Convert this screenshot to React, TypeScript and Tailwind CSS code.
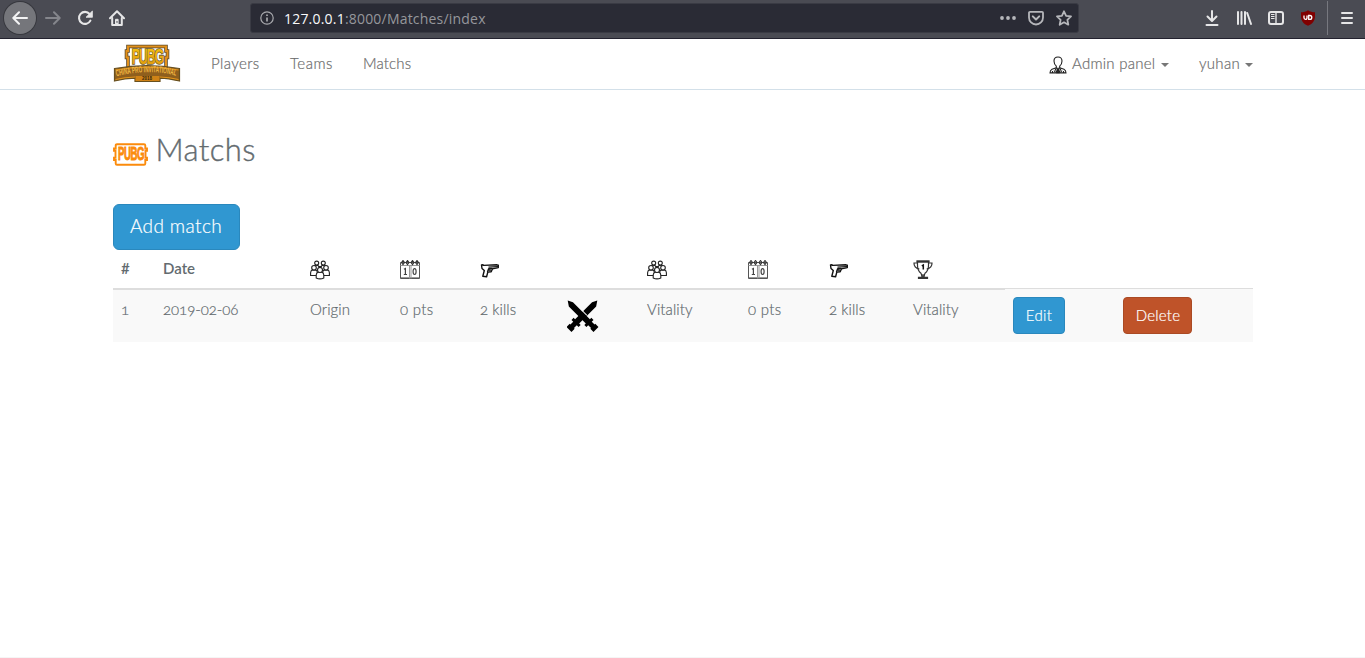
import type { ReactNode } from 'react';

const UI = "font-['Lato','Liberation_Sans',sans-serif]";

function Back() {
  return (
    <span className="flex h-8 w-8 items-center justify-center rounded-full bg-[#75767b] shadow-[0_0_0_1px_#37383e]">
      <svg width="16" height="16" viewBox="0 0 16 16" fill="none" stroke="#f3f3f4" strokeWidth="2" strokeLinecap="round" strokeLinejoin="round">
        <path d="M15 8H1.5M7 2.3 1.3 8 7 13.7" />
      </svg>
    </span>
  );
}

function Forward() {
  return (
    <svg width="16" height="16" viewBox="0 0 16 16" fill="none" stroke="#85868c" strokeWidth="2" strokeLinecap="round" strokeLinejoin="round">
      <path d="M1 8h13.5M9 2.3 14.7 8 9 13.7" />
    </svg>
  );
}

function Reload() {
  return (
    <svg width="16" height="16" viewBox="0 0 16 16" fill="none">
      <path d="M13.4 10.6A6 6 0 1 1 12.6 4" stroke="#e6e6e7" strokeWidth="2.1" strokeLinecap="round" />
      <path d="M15.4 1v6.3H9z" fill="#e6e6e7" stroke="#e6e6e7" strokeWidth=".8" strokeLinejoin="round" />
    </svg>
  );
}

function Home() {
  return (
    <svg width="16" height="16" viewBox="0 0 16 16" fill="none" stroke="#e6e6e7" strokeWidth="2" strokeLinecap="round" strokeLinejoin="round">
      <path d="M1 8.3 8 1.3l7 7" />
      <path d="M3.2 8v7h9.6V8" />
      <path d="M6.9 9.3h2.2V15H6.9z" fill="#e6e6e7" strokeWidth="1" />
      <path d="M8 11.6v.6" stroke="#4a4b53" strokeWidth="1.2" />
    </svg>
  );
}

function UrlBar() {
  return (
    <div className="ml-[125px] flex h-[30px] w-[829px] items-center rounded-[3px] border border-[#3a3b44] bg-[#2a2b35] pr-[6px] pl-[9px]">
      <svg width="14" height="14" viewBox="0 0 14 14" fill="none" stroke="#a9aaae">
        <circle cx="7" cy="7" r="6.2" strokeWidth="1.2" />
        <path d="M7 6.4v4M7 3.4v1.6" strokeWidth="1.7" />
      </svg>
      <span className="mt-[2px] ml-[10px] font-['Open_Sans','Noto_Sans',sans-serif] text-[14px] leading-5 tracking-[0.2px] whitespace-nowrap text-[#96979c]">
        <span className="text-[#f9f9fa]">127.0.0.1</span>:8000/Matches/index
      </span>
      <span className="ml-auto flex items-center gap-3">
        <svg width="16" height="16" viewBox="0 0 16 16" fill="#b6b7bb">
          <circle cx="2" cy="8" r="1.9" />
          <circle cx="8" cy="8" r="1.9" />
          <circle cx="14" cy="8" r="1.9" />
        </svg>
        <svg width="16" height="16" viewBox="0 0 16 16" fill="none" stroke="#b6b7bb" strokeLinecap="round" strokeLinejoin="round">
          <path d="M2 1.8h12a1 1 0 0 1 1 1V7.500a7 7 0 0 1-14 0V2.800a1 1 0 0 1 1-1z" strokeWidth="1.8" />
          <path d="M4.800 6.400 8 9.500l3.200-3.100" strokeWidth="2" />
        </svg>
        <svg width="16" height="16" viewBox="0 0 16 16" fill="none" stroke="#b6b7bb" strokeWidth="1.8" strokeLinejoin="round">
          <path d="m8 1.300 2.100 4.500 4.900.6-3.600 3.400.9 4.900L8 12.300l-4.300 2.400.9-4.900L1 6.400l4.900-.6z" />
        </svg>
      </span>
    </div>
  );
}

function BrowserBar() {
  return (
    <div className="flex h-[39px] items-start border-b border-[#23222f] bg-[#4a4b53] pt-[3px]">
      <div className="flex h-[30px] w-full items-center">
        <span className="ml-1"><Back /></span>
        <span className="ml-[9px]"><Forward /></span>
        <span className="ml-4"><Reload /></span>
        <span className="ml-4"><Home /></span>
        <UrlBar />
        <div className="ml-auto flex items-center gap-4">
          <svg width="16" height="16" viewBox="0 0 16 16" fill="none" stroke="#e6e6e7" strokeWidth="2" strokeLinecap="round" strokeLinejoin="round">
            <path d="M8 1v9.500M3.500 6.500 8 11l4.500-4.500M2.500 15h11" />
          </svg>
          <svg width="16" height="16" viewBox="0 0 16 16" fill="none" stroke="#e6e6e7" strokeWidth="2" strokeLinecap="round">
            <path d="M2 2v12M5.500 2v12M9 2v12" />
            <path d="m11.200 3 3.800 11" />
          </svg>
          <svg width="16" height="16" viewBox="0 0 16 16" fill="none" stroke="#e6e6e7">
            <rect x="1" y="2" width="14" height="12" rx="2" strokeWidth="2" />
            <path d="M8 2v12" strokeWidth="1.400" />
            <path d="M3 4.500h3.500M3 6.500h3.500M3 8.500h3.500" />
          </svg>
          <svg width="16" height="16" viewBox="0 0 16 16">
            <path d="M8 .2C10 1.700 12.500 2.200 15 2.200V6c0 5-2.500 7.800-7 9.800C3.500 13.800 1 11 1 6V2.200C3.500 2.200 6 1.700 8 .2z" fill="#800000" />
            <path d="M4 5.500v2.300q0 1.500 1.500 1.500T7 7.800V5.500" fill="none" stroke="#fff" strokeWidth="1.300" />
            <path d="M8.700 5.500h1.200a1.900 1.900 0 0 1 0 3.800H8.700z" fill="none" stroke="#fff" strokeWidth="1.300" />
          </svg>
        </div>
        <span className="ml-[11px] h-[34px] w-px bg-[#77787f]" />
        <svg className="mr-[11px] ml-[12px]" width="14" height="14" viewBox="0 0 14 14" stroke="#e6e6e7" strokeWidth="2" strokeLinecap="round">
          <path d="M2 2h10M2 7h10M2 12h10" />
        </svg>
      </div>
    </div>
  );
}

function BrandLogo() {
  return (
    <svg width="68" height="39" viewBox="0 0 68 39">
      <defs>
        <linearGradient id="gold" x1="0" y1="0" x2="0" y2="1">
          <stop offset="0" stopColor="#f6c40f" />
          <stop offset="1" stopColor="#dd950e" />
        </linearGradient>
        <path id="ribbonArc" d="M3.500 32.300Q18 28.600 34 28.200T64.500 32.300" />
      </defs>
      <path d="M15 24V13.500h-1.500V7H15V2.500h38V7h1.500v6.500H53V24" fill="#fff" stroke="#5d4a2b" strokeWidth="3.600" />
      <path d="M15 24V13.500h-1.500V7H15V2.500h38V7h1.500v6.500H53V24" fill="none" stroke="#e2901a" strokeWidth="2" />
      <g transform="translate(18.800 20.300) scale(.64 1.060)">
        <text x="0" y="0" fontFamily="Liberation Sans, sans-serif" fontWeight="bold" fontSize="20" letterSpacing="-2.500" textLength="48" fill="url(#gold)" stroke="#6d5a2c" strokeWidth="1.600" paintOrder="stroke">PUBG</text>
      </g>
      <path d="M1.500 24.500Q34 18.800 66.500 24.500V37Q55 34.500 47 34.200V37.500H22v-3.300Q12 34.500 1.500 37z" fill="#8f5f1d" stroke="#68501f" strokeWidth="1.200" />
      <path d="M2.500 26Q34 20.300 65.500 26M2.500 35.500Q12 33.300 22 33M47 33Q56 33.300 65.500 35.500" fill="none" stroke="#e2941c" strokeWidth="1.200" />
      <text fontFamily="Liberation Sans, sans-serif" fontWeight="bold" fontSize="8.800" fill="#f0b540">
        <textPath href="#ribbonArc" textLength="60" lengthAdjust="spacingAndGlyphs">CHINA PRO INVITATIONAL</textPath>
      </text>
      <path d="M22.500 32h24v5h-24z" fill="#cf8216" />
      <text x="29" y="36.300" fontFamily="Liberation Sans, sans-serif" fontWeight="bold" fontSize="4.800" textLength="10" lengthAdjust="spacingAndGlyphs" fill="#2f2411">2018</text>
    </svg>
  );
}

function Caret() {
  return <span className="mt-[3px] h-0 w-0 border-x-4 border-t-4 border-x-transparent border-t-[#777]" />;
}

function AdminIcon() {
  return (
    <svg width="18" height="18" viewBox="0 0 18 18" fill="none" stroke="#222" strokeWidth="1.100">
      <path d="M9 1C6.500 1 5 2.600 5 5c0 2.200.9 4 2.300 5.100v2.100h3.400v-2.100C12.100 9 13 7.200 13 5c0-2.400-1.500-4-4-4z" />
      <path d="M7.300 11.800 3 13.200C1.500 14 1 15 1 16.900h16c0-1.900-.5-2.900-2-3.700l-4.300-1.400" />
      <path d="M6 12.500 8 16.500M12 12.500l-2 4M3.500 17v-2M14.500 17v-2M5 14.500l1.500 2M13 14.500l-1.500 2" />
      <path d="M8 13h2l-.5 1.300.6 2.400H7.900l.6-2.400z" fill="#222" />
    </svg>
  );
}

function Navbar() {
  return (
    <nav className="h-[51px] border-b border-[#d3e0e9] bg-white">
      <div className="mx-auto flex h-[50px] w-[1140px] items-center pb-[2px] text-[15px] leading-[22px] font-light text-[#6c6c6c] [-webkit-text-stroke:0.2px]">
        <span className="mt-px"><BrandLogo /></span>
        <a className="ml-[30.5px] w-[49px] tracking-[0.4px]">Players</a>
        <a className="ml-[30px] w-[43px] tracking-[0.5px]">Teams</a>
        <a className="ml-[30px] w-12 tracking-[0.15px]">Matchs</a>
        <div className="ml-auto flex items-center">
          <span className="mt-[3px]"><AdminIcon /></span>
          <a className="ml-[5px] flex w-[97px] items-center justify-between pl-[0.5px] tracking-[0.25px] whitespace-nowrap">Admin panel<Caret /></a>
          <a className="ml-[30px] flex w-[54px] items-center justify-between pl-[0.5px] tracking-[0.3px]">yuhan<Caret /></a>
        </div>
      </div>
    </nav>
  );
}

function PubgBadge() {
  return (
    <svg width="35" height="23" viewBox="0 0 35 23">
      <path d="M4 1.200h27q1.300 0 1.300 1.300v3h1.700v2.300h-1.500v7h1.500V17h-1.700v3.500q0 1.300-1.300 1.300H4q-1.300 0-1.300-1.300V17H1v-2.200h1.500v-7H1V5.500h1.700v-3q0-1.300 1.300-1.300z" fill="none" stroke="#fb8b0c" strokeWidth="1.900" />
      <g transform="translate(5 17.400) scale(.55 1)">
        <text x="0" y="0" fontFamily="Liberation Sans, sans-serif" fontWeight="bold" fontSize="17.500" letterSpacing="-.8" fill="#fb8b0c" stroke="#fb8b0c" strokeWidth="1">PUBG</text>
      </g>
    </svg>
  );
}

function TeamIcon() {
  return (
    <svg width="20" height="20" viewBox="0 0 20 20" fill="#fff" stroke="#222" strokeWidth="1.100">
      <path d="M3.800 7.500Q4 5.300 6.500 5.300T9.200 7.500M10.800 7.500q.2-2.200 2.700-2.200t2.700 2.200" />
      <circle cx="6.700" cy="3.100" r="2" />
      <circle cx="13.300" cy="3.100" r="2" />
      <path d="M.6 15.500v-2.700q0-2.300 2-2.900h2.800q2 .6 2 2.900v2.700zM12.600 15.500v-2.700q0-2.300 2-2.900h2.800q2 .6 2 2.900v2.700z" />
      <circle cx="4" cy="7.800" r="2.300" />
      <circle cx="16" cy="7.800" r="2.300" />
      <path d="M6.200 18v-3q0-2.300 2.200-2.900h3.200q2.200.6 2.200 2.900v3q-3.800 1.800-7.600 0z" />
      <circle cx="10" cy="10" r="2.500" />
      <path d="m8.500 6.300 3 1.500M11.500 6.300l-3 1.500" />
    </svg>
  );
}

function ScoreIcon() {
  return (
    <svg width="20" height="20" viewBox="0 0 20 20" fill="none" stroke="#555" strokeWidth="1">
      <path d="M.5 2.500h19v16H.5z" />
      <path d="M.5 5.500h19M9.500 5.500v13M11 5.500v13M1 17.500h18" stroke="#999" />
      <path d="m1.500 2.500 1.500-2 1.500 2-1.500 2zM6 2.500l1.500-2 1.500 2-1.500 2zM11 2.500l1.500-2 1.500 2-1.500 2zM15.500 2.500l1.500-2 1.500 2-1.500 2z" stroke="#333" strokeWidth="1.100" />
      <path d="M3.900 9.200 5.400 8.500v6.200M3.800 14.500h3.200" stroke="#444" strokeWidth="1.200" />
      <ellipse cx="14.600" cy="11.600" rx="1.500" ry="2.900" stroke="#444" strokeWidth="1.200" />
    </svg>
  );
}

function GunIcon() {
  return (
    <svg width="20" height="20" viewBox="0 0 20 20" fill="#fff" stroke="#111" strokeWidth="1.400" strokeLinejoin="round">
      <path d="M1.500 5 3 4.800l.6.600L17 4.800l1.300.4v2.400l-5.800 1.100-1.300 3.100-3.400.3-1.200 4.600-3.800-.4 1.500-5.800L2 8.500z" />
      <path d="M8.500 7.200 18 6.500" strokeWidth="1.200" />
      <path d="m7.500 12 1.200-3.300 3.500-.2M9.800 9.500l.3 1.700" strokeWidth="1.500" />
    </svg>
  );
}

function TrophyIcon() {
  return (
    <svg width="20" height="20" viewBox="0 0 20 20" fill="none" stroke="#333" strokeWidth="1.200">
      <path d="M4.500 1.500h11v4q0 5-3.500 7.800L11 16H9l-1-2.700Q4.500 10.500 4.500 5.500z" />
      <path d="M4 .9h12v1.200H4z" fill="#777" />
      <path d="M4.700 3H1Q.8 7.700 6.300 9.200M15.300 3H19q.2 4.700-5.300 6.200" />
      <path d="M9 14v3h2v-3" />
      <path d="M5.500 17.300h9v1.200h-9z" fill="#555" />
      <path d="M8.800 5.800 10.300 5v4.500" stroke="#111" strokeWidth="1.500" />
    </svg>
  );
}

const SWORD = 'M-2.900-16 .5-21 2.900-16V8H5V11H2.500V15H3.500V19.500H-3.500V15H-2.500V11H-5V8H-2.900z';

function SwordsIcon() {
  return (
    <svg width="32" height="32" viewBox="0 0 32 32" fill="#000">
      <path d={SWORD} transform="translate(15.800 15.700) rotate(45) scale(-1 1)" />
      <path d="M3.500-5V3" transform="translate(15.200 15.700) rotate(-45)" stroke="#f9f9f9" strokeWidth="1.200" />
      <path d={SWORD} transform="translate(15.200 15.700) rotate(-45)" />
    </svg>
  );
}

type Column = { width: string; head: ReactNode; cell: ReactNode; thin?: boolean };

const columns: Column[] = [
  { width: 'w-[42px]', head: '#', cell: '1' },
  { width: 'w-[147px]', head: 'Date', cell: <span className="tracking-[-0.05px]">2019-02-06</span> },
  { width: 'w-[90px]', head: <TeamIcon />, cell: 'Origin' },
  { width: 'w-[80px]', head: <ScoreIcon />, cell: <span className="tracking-[0.3px]">0 pts</span> },
  { width: 'w-[87px]', head: <GunIcon />, cell: '2 kills' },
  { width: 'w-[80px]', head: '', cell: <SwordsIcon /> },
  { width: 'w-[101px]', head: <TeamIcon />, cell: 'Vitality' },
  { width: 'w-[81px]', head: <ScoreIcon />, cell: <span className="tracking-[0.3px]">0 pts</span> },
  { width: 'w-[84px]', head: <GunIcon />, cell: '2 kills' },
  { width: 'w-[100px]', head: <TrophyIcon />, cell: 'Vitality' },
  {
    width: 'w-[110px]',
    head: '',
    thin: true,
    cell: <button className="h-[37px] w-[52px] rounded-[4px] border border-[#2a88bd] bg-[#3097d1] pb-[2px] pl-px text-[15px] tracking-[0.3px] text-white">Edit</button>,
  },
  {
    width: 'w-[138px]',
    head: '',
    thin: true,
    cell: <button className="h-[37px] w-[69px] rounded-[4px] border border-[#aa4a24] bg-[#bf5329] pb-[2px] pl-[2px] text-[15px] tracking-[0.2px] text-white">Delete</button>,
  },
];

function MatchTable() {
  return (
    <table className="w-full table-fixed border-separate border-spacing-0 text-left text-[15px] leading-[22px] text-[#636b6f]">
      <thead>
        <tr className="h-10">
          {columns.map((c, i) => (
            <th key={i} className={`${c.width} bg-white p-0 align-top font-semibold`}>
              <div className={c.thin ? 'h-[39px] border-b border-[#ddd] px-2 pt-[7px]' : 'h-10 border-b-2 border-[#ddd] px-2 pt-[7px]'}>
                <div className={typeof c.head === 'string' ? 'pl-[0.5px]' : 'pt-[3px]'}>{c.head}</div>
              </div>
              {c.thin && <div className="h-px bg-[#f9f9f9]" />}
            </th>
          ))}
        </tr>
      </thead>
      <tbody>
        <tr className="h-[52px] bg-[#f9f9f9] font-light [-webkit-text-stroke:0.2px]">
          {columns.map((c, i) => (
            <td key={i} className="px-2 pt-[7px] pb-0 align-top whitespace-nowrap">
              <div className={i === 5 ? 'pt-[3px]' : i > 9 ? '' : 'pt-px pl-[0.5px] tracking-[0.08px] [font-variant-numeric:oldstyle-nums]'}>{c.cell}</div>
            </td>
          ))}
        </tr>
      </tbody>
    </table>
  );
}

export default function App() {
  return (
    <div className={`flex h-[658px] flex-col overflow-hidden bg-white ${UI}`}>
      <BrowserBar />
      <Navbar />
      <main className="mx-auto w-[1140px] flex-1 pt-[43px]">
        <h1 className="flex h-[37px] items-start text-[31px] leading-[33px] font-light text-[#636b6f] [-webkit-text-stroke:0.4px]">
          <span className="mt-[10px]"><PubgBadge /></span>
          <span className="ml-[8px] tracking-[0.4px]">Matchs</span>
        </h1>
        <button className="mt-[34px] block h-[46px] w-[127px] rounded-[6px] border border-[#2a88bd] bg-[#3097d1] pb-[2px] text-[19px] font-light tracking-[0.4px] text-white [-webkit-text-stroke:0.2px]">
          Add match
        </button>
        <MatchTable />
      </main>
      <div className="h-px bg-[#f5f5f5]" />
    </div>
  );
}
